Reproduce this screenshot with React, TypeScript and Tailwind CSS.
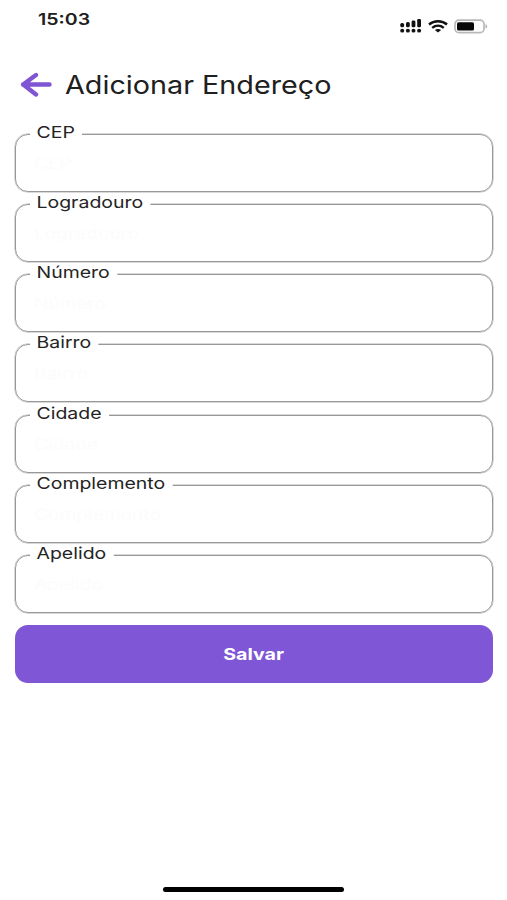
type Field = { label: string };

const fields: Field[] = [
  { label: "CEP" },
  { label: "Logradouro" },
  { label: "Número" },
  { label: "Bairro" },
  { label: "Cidade" },
  { label: "Complemento" },
  { label: "Apelido" },
];

function SignalIcon() {
  return (
    <svg width="22" height="16" viewBox="0 0 22 16" fill="#111">
      <rect x="0.3" y="5" width="3.8" height="4.3" rx="1.6" />
      <rect x="6" y="4" width="3.8" height="5.3" rx="1.6" />
      <rect x="11.6" y="2.6" width="3.8" height="6.7" rx="1.4" />
      <rect x="17.2" y="1" width="3.8" height="8.3" rx="1.3" />
      <ellipse cx="2.2" cy="12.7" rx="2" ry="1.9" />
      <ellipse cx="7.9" cy="12.7" rx="2" ry="1.9" />
      <ellipse cx="13.5" cy="12.7" rx="2" ry="1.9" />
      <ellipse cx="19.1" cy="12.7" rx="2" ry="1.9" />
    </svg>
  );
}

function WifiIcon() {
  return (
    <svg width="20" height="13" viewBox="0 0 20 13" fill="none" stroke="#111" strokeWidth="2.4">
      <path d="M1 4.5C6 .1 14 .1 19 4.5" />
      <path d="M4.2 7.9c3.4-2.8 8.2-2.8 11.6 0" />
      <path d="M6.9 10.1c1.9-1.4 4.3-1.4 6.2 0L10 12.6z" fill="#111" stroke="none" />
    </svg>
  );
}

function BatteryIcon() {
  return (
    <svg width="34" height="15" viewBox="0 0 34 15">
      <rect x="1" y="1.2" width="29" height="12.4" rx="3.8" fill="white" stroke="#b9b9b9" strokeWidth="1.7" />
      <rect x="3" y="3.2" width="17" height="8.4" rx="1.6" fill="#080808" />
      <path d="M31.5 5.3c2.2.5 2.2 3.8 0 4.3z" fill="#b0b0b0" />
    </svg>
  );
}

function FormField({ label }: Field) {
  return (
    <div className="h-[70.25px]">
      <div className="h-[58px] rounded-[13px] border border-[#989898] shadow-[0_0_0_0.5px_#b4b4b4]">
        <div className="flex h-0 items-center pl-[14px]">
          <label className="origin-left -translate-y-[3px] scale-x-[1.18] whitespace-nowrap bg-white pl-[5.5px] pr-[6px] text-[16.5px] leading-[16px] text-[#242424]">
            {label}
          </label>
        </div>
        <div className="flex h-full items-center pl-[18px]">
          <span className="origin-left scale-x-[1.2] text-[16px] text-[#fcfcfc]">{label}</span>
        </div>
      </div>
    </div>
  );
}

export default function App() {
  return (
    <main className="flex h-[900px] w-[507px] flex-col overflow-hidden bg-white font-['Inter',sans-serif]">
      <div className="flex h-[48px] shrink-0 justify-between pl-[38px] pr-[19px]">
        <span className="mt-[9px] origin-left scale-x-[1.22] text-[16px] font-semibold leading-[20px] text-[#202020]">
          15:03
        </span>
        <div className="mt-[18px] flex h-[16px] items-center gap-[6px]">
          <SignalIcon />
          <WifiIcon />
          <BatteryIcon />
        </div>
      </div>

      <header className="flex h-[74px] shrink-0 items-center pl-[20px]">
        <svg width="33" height="26" viewBox="0 0 33 26" fill="none" stroke="#8055d4" strokeWidth="4.4" strokeLinecap="round" strokeLinejoin="round">
          <path d="M29.5 12.5H3M16 3L3.2 12.5 16 22.5" />
        </svg>
        <h1 className="ml-[12px] origin-left scale-x-[1.15] whitespace-nowrap text-[25px] leading-[30px] text-[#202020]">
          Adicionar Endereço
        </h1>
      </header>

      <form className="ml-[15px] mr-[14.5px] mt-[11.5px]">
        {fields.map((field) => (
          <FormField key={field.label} label={field.label} />
        ))}
        <button type="button" className="flex h-[58px] w-full items-center justify-center rounded-[13px] bg-[#7f56d6] text-white">
          <span className="mt-px scale-x-[1.19] text-[16.5px] font-bold">Salvar</span>
        </button>
      </form>

      <div className="mx-auto mb-[8px] mt-auto h-[5px] w-[181px] rounded-full bg-black" />
    </main>
  );
}
